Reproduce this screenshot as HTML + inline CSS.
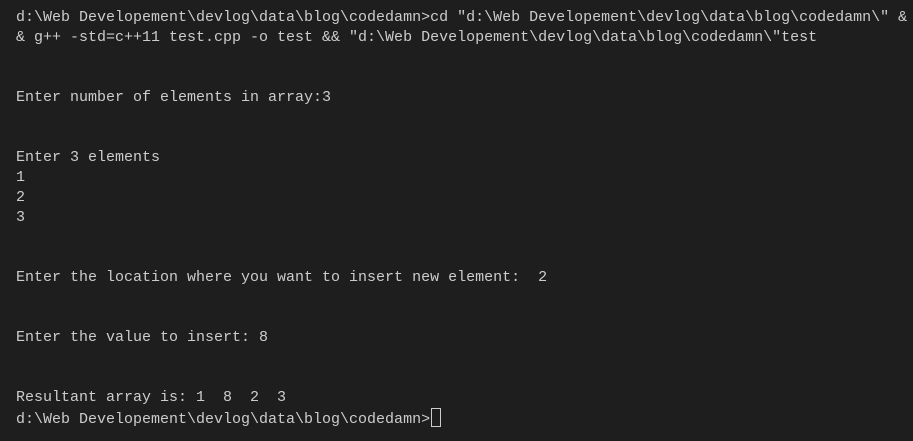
<!DOCTYPE html>
<html><head><style>
html,body{margin:0;padding:0;background:#1e1e1e;width:913px;height:441px;overflow:hidden}
pre{margin:0;position:absolute;left:16px;top:8px;font-family:"Liberation Mono",monospace;font-size:15px;line-height:20px;color:#cccccc;white-space:pre}
.cur{display:inline-block;width:8px;height:17px;border:1px solid #cccccc;vertical-align:-4px;margin-left:1px}
</style></head><body>
<pre>d:\Web Developement\devlog\data\blog\codedamn&gt;cd "d:\Web Developement\devlog\data\blog\codedamn\" &amp;
&amp; g++ -std=c++11 test.cpp -o test &amp;&amp; "d:\Web Developement\devlog\data\blog\codedamn\"test


Enter number of elements in array:3


Enter 3 elements
1
2
3


Enter the location where you want to insert new element:  2


Enter the value to insert: 8


Resultant array is: 1  8  2  3
d:\Web Developement\devlog\data\blog\codedamn&gt;<span class="cur"></span></pre>
</body></html>
